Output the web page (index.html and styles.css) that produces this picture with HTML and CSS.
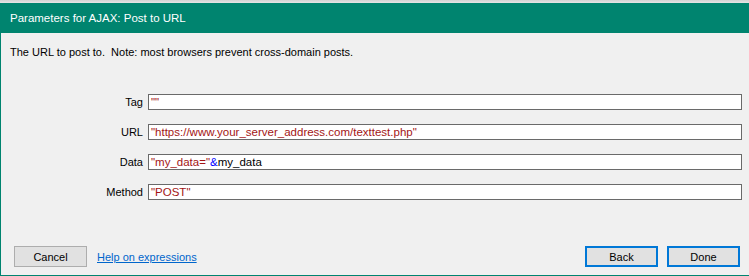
FILE: index.html
```html
<!DOCTYPE html>
<html lang="en">
<head>
    <meta charset="UTF-8">
    <title>Parameters for AJAX: Post to URL</title>
    <link rel="stylesheet" href="styles.css">
</head>
<body>
    <div class="top-strip"></div>
    <div class="dialog">
        <div class="titlebar">Parameters for AJAX: Post to URL</div>
        <p class="description">The URL to post to.&nbsp; Note: most browsers prevent cross-domain posts.</p>

        <div class="fields">
            <label>Tag</label>
            <div class="field"><span class="str">""</span></div>

            <label>URL</label>
            <div class="field"><span class="str">"https://www.your_server_address.com/texttest.php"</span></div>

            <label>Data</label>
            <div class="field"><span class="str">"my_data="</span><span class="op">&amp;</span>my_data</div>

            <label>Method</label>
            <div class="field"><span class="str">"POST"</span></div>
        </div>

        <div class="footer">
            <button class="btn">Cancel</button>
            <a href="#" class="help-link">Help on expressions</a>
            <div class="spacer"></div>
            <button class="btn btn-default">Back</button>
            <button class="btn btn-default">Done</button>
        </div>
    </div>
</body>
</html>
```

FILE: styles.css
```css
* {
    margin: 0;
    padding: 0;
    box-sizing: border-box;
}

body {
    width: 749px;
    height: 276px;
    overflow: hidden;
    background: #f0f0f0;
    font-family: "Liberation Sans", Arial, sans-serif;
    font-size: 11px;
    color: #000;
}

.top-strip {
    height: 3px;
    background: linear-gradient(#d2d2d2, #e6e6e6);
}

.dialog {
    height: 273px;
    border-left: 1px solid #00846f;
    border-bottom: 1px solid #00846f;
    display: flex;
    flex-direction: column;
}

.titlebar {
    height: 30px;
    background: #00846f;
    color: #fff;
    font-size: 11.5px;
    line-height: 30px;
    padding-left: 9px;
}

.description {
    margin-top: 11px;
    padding-left: 9px;
    line-height: 16px;
}

.fields {
    display: grid;
    grid-template-columns: 142px 594px;
    column-gap: 5px;
    row-gap: 14px;
    margin-top: 34px;
}

.fields label {
    text-align: right;
    line-height: 16px;
}

.field {
    height: 16px;
    background: #fff;
    border: 1px solid #6a6a6a;
    font-size: 11.5px;
    line-height: 14px;
    padding-left: 2px;
    white-space: nowrap;
}

.str {
    color: #a31515;
}

.op {
    color: #0000ff;
}

.footer {
    display: flex;
    align-items: center;
    margin-top: auto;
    margin-bottom: 8px;
    padding: 0 9px 0 13px;
}

.btn {
    width: 73px;
    height: 21px;
    background: #e1e1e1;
    border: 1px solid #adadad;
    font-family: inherit;
    font-size: 11px;
    color: #000;
}

.btn-default {
    border: 2px solid #0078d7;
    margin-left: 9px;
}

.help-link {
    margin-left: 10px;
    color: #0066cc;
    text-decoration: underline;
}

.spacer {
    flex: 1;
}
```
